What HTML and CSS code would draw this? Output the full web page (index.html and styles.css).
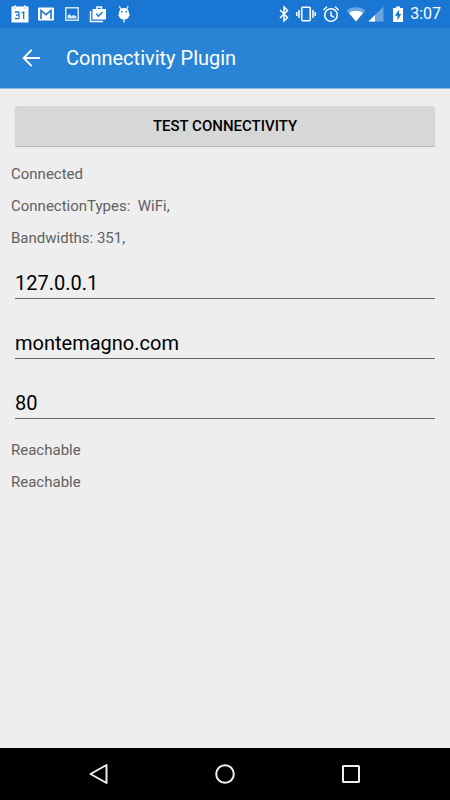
FILE: index.html
```html
<!DOCTYPE html>
<html lang="en">
<head>
<meta charset="utf-8">
<meta name="viewport" content="width=device-width, initial-scale=1">
<title>Connectivity Plugin</title>
<link rel="stylesheet" href="styles.css">
</head>
<body>
<div class="status-bar">
  <div class="notifications">
    <svg class="icon" viewBox="0 0 18 18" aria-hidden="true">
      <path fill="#fff" d="M.5 1.500h2.500V.5h2v1h8v-1h2v1H17.500V17.500H.5z"/>
      <path fill="none" stroke="#1976d2" stroke-width="1.300" d="M3.800 7h3.400q1 0 1 1.500t-1.200 1.700H5M7 10.200q1.300.2 1.300 1.700t-1.100 1.800H3.700M10.500 8l2.200-1v7.300"/>
      <path fill="#1976d2" d="M3.500 2.500h1v1h-1zM13.500 2.500h1v1h-1z"/>
    </svg>
    <svg class="icon" viewBox="0 0 18 18" aria-hidden="true">
      <rect x="1" y="2.500" width="16" height="13" rx="1" fill="#fff"/>
      <path fill="none" stroke="#1976d2" stroke-width="1.600" d="M4 14V5.500l5 4.200 5-4.200V14"/>
    </svg>
    <svg class="icon faded" viewBox="0 0 18 18" aria-hidden="true">
      <rect x="2.750" y="2.750" width="12.500" height="12.500" fill="none" stroke="#fff" stroke-width="1.500"/>
      <path fill="#fff" d="M4.500 13.500V10.500l2-1.500 2 2 2-1 1.500.5 1.500 1v2z"/>
    </svg>
    <svg class="icon" viewBox="0 0 18 18" aria-hidden="true">
      <path fill="none" stroke="#fff" stroke-width="1.500" d="M1.500 6v10.500H14M8 4.500V2h4.500v2.500"/>
      <path fill="#fff" d="M3.500 4H17v9.500a1 1 0 0 1-1 1H4.500a1 1 0 0 1-1-1z"/>
      <path fill="none" stroke="#1976d2" stroke-width="1.400" d="M7.200 8.800l2.300 2.400 4-4.200"/>
    </svg>
    <svg class="icon" viewBox="0 0 18 18" aria-hidden="true">
      <path fill="none" stroke="#fff" stroke-width="1.200" stroke-linecap="round" d="M4.500 1.500l1.500 3M13 1.500l-1.500 3M9 12v5"/>
      <path fill="#fff" d="M4 8a5 5 0 0 1 10 0v1l1 1-1 1a5 3.500 0 0 1-10 0L3 10l1-1z"/>
      <path fill="#1976d2" d="M6 6h1.500v1.500H6zM10.500 6H12v1.500h-1.500z"/>
    </svg>
  </div>
  <div class="system">
    <svg class="icon-bluetooth" viewBox="0 0 12 18" aria-hidden="true">
      <path fill="none" stroke="#fff" stroke-width="1.500" d="M2 5l7.500 7.500L6 16V2l3.500 3.500L2 13"/>
    </svg>
    <svg class="icon-vibrate" viewBox="0 0 20 18" aria-hidden="true">
      <rect x="5.750" y="2.250" width="8.500" height="13.500" rx="1" fill="none" stroke="#fff" stroke-width="1.600"/>
      <path stroke="#fff" stroke-width="1.500" d="M3 5v8M.8 7v4M17 5v8M19.200 7v4"/>
    </svg>
    <svg class="icon" viewBox="0 0 18 18" aria-hidden="true">
      <circle cx="9" cy="10" r="6.300" fill="none" stroke="#fff" stroke-width="1.600"/>
      <path fill="none" stroke="#fff" stroke-width="1.500" d="M1.300 5L5 1.800M16.700 5L13 1.800M9 6.500v4l3 1.800"/>
    </svg>
    <svg class="icon-wifi" viewBox="0 0 20 18" aria-hidden="true">
      <path fill="#fff" fill-opacity=".35" d="M.5 5.500C5.500 1 14.500 1 19.500 5.500L10 16.500z"/>
      <path fill="#fff" d="M3 8C6.500 5 13.500 5 17 8l-7 8.500z"/>
    </svg>
    <svg class="icon-signal" viewBox="0 0 16 18" aria-hidden="true">
      <path fill="#fff" fill-opacity=".35" d="M15.500 1.500v15H.5z"/>
      <path fill="#fff" d="M7 10v6.500H.5z"/>
    </svg>
    <svg class="icon-battery" viewBox="0 0 12 18" aria-hidden="true">
      <path fill="#fff" d="M4 1.500h4v1.500h3V17H1V3h3z"/>
      <path fill="#1976d2" d="M7 4.800L2.800 10.800H5.500V15.200L9.300 9H7z"/>
    </svg>
    <time class="clock">3:07</time>
  </div>
</div>

<header class="app-bar">
  <button class="back" type="button" aria-label="Back">
    <svg class="icon-back" viewBox="0 0 20 20" aria-hidden="true">
      <path fill="none" stroke="#fff" stroke-width="1.900" d="M19 10H3M10.700 1.900L2.600 10l8.100 8.100"/>
    </svg>
  </button>
  <h1 class="title">Connectivity Plugin</h1>
</header>

<main class="content">
  <button class="test" type="button">TEST CONNECTIVITY</button>
  <p class="line">Connected</p>
  <p class="line">ConnectionTypes:  WiFi,</p>
  <p class="line">Bandwidths: 351,</p>
  <div class="fields">
    <input class="field" type="text" aria-label="IP address" value="127.0.0.1">
    <input class="field" type="text" aria-label="Host" value="montemagno.com">
    <input class="field" type="text" aria-label="Port" value="80">
  </div>
  <p class="line">Reachable</p>
  <p class="line">Reachable</p>
</main>

<nav class="nav-bar">
  <button class="nav-button" type="button" aria-label="Back">
    <svg class="icon-nav" viewBox="0 0 22 22" aria-hidden="true">
      <path fill="none" stroke="#eee" stroke-width="2" stroke-linejoin="round" d="M18.500 2v18L2.500 11z"/>
    </svg>
  </button>
  <button class="nav-button" type="button" aria-label="Home">
    <svg class="icon-nav" viewBox="0 0 22 22" aria-hidden="true">
      <circle cx="11" cy="11" r="8.800" fill="none" stroke="#eee" stroke-width="2"/>
    </svg>
  </button>
  <button class="nav-button" type="button" aria-label="Recent apps">
    <svg class="icon-nav" viewBox="0 0 22 22" aria-hidden="true">
      <rect x="3" y="3" width="16" height="16" rx=".5" fill="none" stroke="#eee" stroke-width="2"/>
    </svg>
  </button>
</nav>
</body>
</html>
```

FILE: styles.css
```css
* {
  box-sizing: border-box;
}

body {
  margin: 0;
  min-height: 100vh;
  display: flex;
  flex-direction: column;
  background: #eee;
  font-family: Roboto, sans-serif;
}

button {
  border: 0;
  padding: 0;
  background: none;
  font-family: inherit;
}

svg {
  display: block;
  height: 18px;
}

.status-bar {
  display: flex;
  justify-content: space-between;
  align-items: center;
  height: 28px;
  padding: 0 9px 0 11px;
  background: #1976d2;
}

.notifications {
  display: flex;
  gap: 8px;
}

.system {
  display: flex;
  align-items: center;
}

.icon {
  width: 18px;
}

.faded {
  opacity: 0.8;
}

.icon-bluetooth {
  width: 12px;
  margin-right: 6px;
}

.icon-vibrate {
  width: 20px;
  margin-right: 6px;
}

.icon-wifi {
  width: 20px;
  margin-left: 6px;
}

.icon-signal {
  width: 16px;
  margin-left: 2px;
}

.icon-battery {
  width: 12px;
  margin: 0 6px 0 8px;
}

.clock {
  color: #fff;
  font-size: 16px;
  font-weight: 400;
  line-height: 20px;
}

.app-bar {
  display: flex;
  align-items: center;
  gap: 25px;
  height: 61px;
  padding: 0 21px;
  background: #2a84d5;
  border-bottom: 1px solid #8fbce4;
}

.icon-back {
  width: 20px;
  height: 20px;
}

.title {
  margin: 0;
  color: #fff;
  font-size: 20px;
  font-weight: 400;
  line-height: 24px;
}

.content {
  flex: 1;
  display: flex;
  flex-direction: column;
  gap: 12px;
  padding: 17px 11px;
}

.test {
  height: 40px;
  margin: 0 4px 6px;
  border-radius: 2px;
  background: #d6d8d7;
  box-shadow: 0 1px 1px rgba(0, 0, 0, 0.25);
  color: #000;
  font-size: 15px;
  font-weight: 500;
}

.line {
  margin: 0;
  color: #616161;
  font-size: 15px;
  line-height: 20px;
  white-space: pre-wrap;
}

.fields {
  display: flex;
  flex-direction: column;
  gap: 24px;
  margin: 3px 4px 9px;
}

.field {
  width: 100%;
  height: 36px;
  padding: 4px 0 0;
  border: 0;
  border-bottom: 1px solid #666;
  border-radius: 0;
  outline: 0;
  background: transparent;
  color: #000;
  font-family: inherit;
  font-size: 20px;
}

.nav-bar {
  display: flex;
  height: 52px;
  padding: 0 8%;
  background: #000;
}

.nav-button {
  flex: 1;
  display: flex;
  align-items: center;
  justify-content: center;
}

.icon-nav {
  width: 22px;
  height: 22px;
}
```
